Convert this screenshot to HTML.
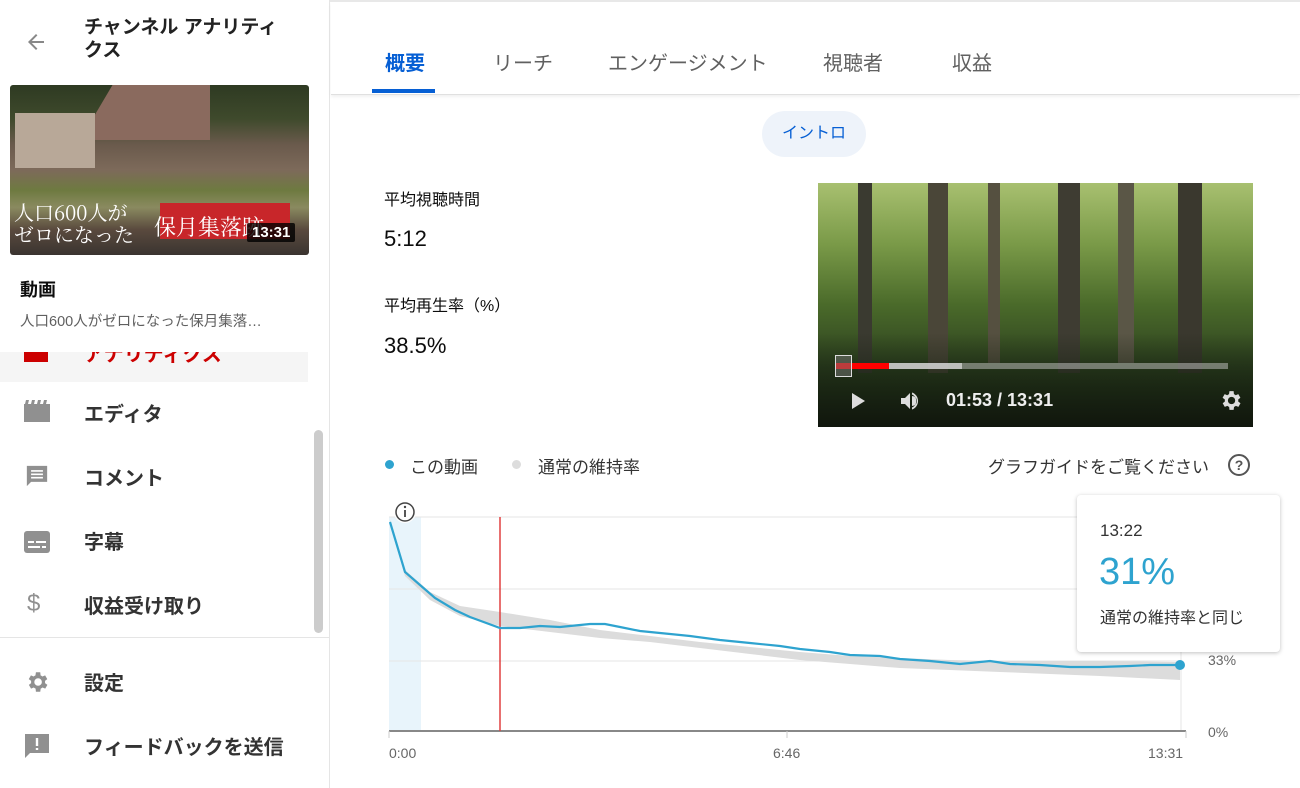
<!DOCTYPE html>
<html><head><meta charset="utf-8"><style>
*{margin:0;padding:0;box-sizing:border-box}
body{width:1300px;height:788px;overflow:hidden;background:#fff;font-family:"Liberation Sans","Noto Sans CJK JP",sans-serif;position:relative;color:#0d0d0d}
.a{position:absolute}
.side{left:0;top:0;width:330px;height:788px;border-right:1px solid #e5e5e5;background:#fff}
.nav{position:absolute;left:84px;font-size:20px;color:#333;font-weight:bold}
.ic{position:absolute;left:24px;width:26px;height:22px}
.tab{position:absolute;top:47px;font-size:20px;color:#606060}
</style></head><body>
<div class="a" style="left:0;top:0;width:1300px;height:2px;background:#e8e8e8"></div>
<div class="a side">
  <svg class="a" style="left:24px;top:30px" width="24" height="24" viewBox="0 0 24 24"><path d="M20 11H7.8l5.6-5.6L12 4l-8 8 8 8 1.4-1.4L7.8 13H20z" fill="#888"/></svg>
  <div class="a" style="left:84px;top:16px;font-size:19px;font-weight:bold;line-height:23px;color:#222">チャンネル アナリティ<br>クス</div>
  <div class="a" style="left:10px;top:85px;width:299px;height:170px;border-radius:3px;overflow:hidden;background:linear-gradient(180deg,#2e3a22 0%,#3f4a2c 20%,#6a5a4c 35%,#7d6a5a 50%,#6e7a40 62%,#8a8a60 72%,#5a4a3e 85%,#3a3430 100%)">
    <div class="a" style="left:70px;top:0;width:130px;height:55px;background:#8a6a5e;clip-path:polygon(25% 0,100% 0,100% 100%,0 100%)"></div>
    <div class="a" style="left:5px;top:28px;width:80px;height:55px;background:#b8a898"></div>
    <div class="a" style="left:150px;top:118px;width:130px;height:36px;background:#c8262a"></div>
    <div class="a" style="left:4px;top:116px;color:#fff;font-family:'Noto Serif CJK SC',serif;font-size:20px;line-height:22px">人口600人が<br>ゼロになった</div>
    <div class="a" style="left:144px;top:126px;color:#fff;font-family:'Noto Serif CJK SC',serif;font-size:22px">保月集落跡</div>
    <div class="a" style="left:237px;top:138px;background:rgba(0,0,0,.8);color:#fff;font-size:15px;font-weight:bold;padding:1px 5px;border-radius:2px">13:31</div>
  </div>
  <div class="a" style="left:20px;top:276px;font-size:18px;font-weight:bold">動画</div>
  <div class="a" style="left:20px;top:310px;font-size:14.5px;color:#606060">人口600人がゼロになった保月集落…</div>
  <div class="a" style="left:0;top:352px;width:308px;height:30px;background:#f5f5f5;overflow:hidden">
    <div class="a" style="left:24px;top:-6px;width:24px;height:16px;background:#cc0000"></div>
    <div class="a" style="left:84px;top:-14px;font-size:20px;color:#cc0000;font-weight:bold">アナリティクス</div>
  </div>
  <svg class="ic" style="top:400px" viewBox="0 0 26 22"><path d="M0 4h26v18H0z M2 0h3l-1 4H1z M8 0h3l-1 4H7z M14 0h3l-1 4h-3z M20 0h3l-1 4h-3z" fill="#909090"/></svg>
  <div class="nav" style="top:398px">エディタ</div>
  <svg class="ic" style="top:465px" viewBox="0 0 26 26"><path d="M1 1h24v19H6l-5 5z" fill="#909090"/><path d="M6 7h14M6 11h14M6 15h14" stroke="#fff" stroke-width="2"/></svg>
  <div class="nav" style="top:462px">コメント</div>
  <svg class="ic" style="top:531px" viewBox="0 0 26 22"><rect x="0" y="0" width="26" height="22" rx="3" fill="#909090"/><path d="M4 11h6M12 11h10M4 16h12M18 16h4" stroke="#fff" stroke-width="2"/></svg>
  <div class="nav" style="top:526px">字幕</div>
  <div class="a" style="left:27px;top:590px;font-size:24px;color:#909090">$</div>
  <div class="nav" style="top:590px">収益受け取り</div>
  <div class="a" style="left:314px;top:430px;width:9px;height:203px;background:#ccc;border-radius:5px"></div>
  <div class="a" style="left:0;top:637px;width:329px;height:1px;background:#e5e5e5"></div>
  <svg class="ic" style="top:669px;height:26px" viewBox="0 0 24 24"><path fill="#909090" d="M19.4 13a7.5 7.5 0 0 0 0-2l2.1-1.6-2-3.5-2.5 1a7.7 7.7 0 0 0-1.7-1L15 3h-4l-.4 2.9a7.7 7.7 0 0 0-1.7 1l-2.5-1-2 3.5L6.6 11a7.5 7.5 0 0 0 0 2l-2.1 1.6 2 3.5 2.5-1a7.7 7.7 0 0 0 1.7 1L11 21h4l.4-2.9a7.7 7.7 0 0 0 1.7-1l2.5 1 2-3.5zM13 15.5a3.5 3.5 0 1 1 0-7 3.5 3.5 0 0 1 0 7z"/></svg>
  <div class="nav" style="top:667px">設定</div>
  <svg class="ic" style="top:733px;height:26px" viewBox="0 0 26 26"><path d="M1 1h24v19H6l-5 5z" fill="#909090"/><path d="M13 5v8M13 15v2" stroke="#fff" stroke-width="2.4"/></svg>
  <div class="nav" style="top:731px">フィードバックを送信</div>
</div>
<div class="a" style="left:331px;top:2px;width:969px;height:93px;border-bottom:1px solid #e0e0e0;box-shadow:0 2px 3px rgba(0,0,0,.06)"></div>
<div class="tab" style="left:385px;color:#065fd4;font-weight:bold">概要</div>
<div class="a" style="left:372px;top:89px;width:63px;height:4px;background:#065fd4"></div>
<div class="tab" style="left:493px">リーチ</div>
<div class="tab" style="left:608px">エンゲージメント</div>
<div class="tab" style="left:823px">視聴者</div>
<div class="tab" style="left:952px">収益</div>
<div class="a" style="left:762px;top:111px;width:104px;height:46px;border-radius:23px;background:#eef3fa;color:#065fd4;font-size:16px;text-align:center;line-height:46px">イントロ</div>
<div class="a" style="left:384px;top:186px;font-size:16px">平均視聴時間</div>
<div class="a" style="left:384px;top:226px;font-size:22px">5:12</div>
<div class="a" style="left:384px;top:292px;font-size:16px">平均再生率（%）</div>
<div class="a" style="left:384px;top:333px;font-size:22px">38.5%</div>
<div class="a" style="left:818px;top:183px;width:435px;height:244px;overflow:hidden;background:linear-gradient(180deg,#a8c070 0%,#7a9a48 25%,#4a6a2a 50%,#2e4220 75%,#1e2a18 100%)">
  <div class="a" style="left:40px;top:0;width:14px;height:190px;background:#3a3a30"></div>
  <div class="a" style="left:110px;top:0;width:20px;height:190px;background:#4a4638"></div>
  <div class="a" style="left:170px;top:0;width:12px;height:180px;background:#555040"></div>
  <div class="a" style="left:240px;top:0;width:22px;height:190px;background:#3e3c32"></div>
  <div class="a" style="left:300px;top:0;width:16px;height:180px;background:#5a5646"></div>
  <div class="a" style="left:360px;top:0;width:24px;height:190px;background:#3a382e"></div>
  <div class="a" style="left:0;top:150px;width:435px;height:94px;background:linear-gradient(180deg,rgba(20,30,15,0) 0%,rgba(20,30,15,.7) 60%,rgba(15,20,12,.9) 100%)"></div>
  <div class="a" style="left:18px;top:180px;width:392px;height:6px;background:rgba(200,200,200,.5)"></div>
  <div class="a" style="left:18px;top:180px;width:126px;height:6px;background:rgba(220,220,220,.7)"></div>
  <div class="a" style="left:18px;top:180px;width:53px;height:6px;background:#f00"></div>
  <div class="a" style="left:17px;top:172px;width:17px;height:22px;border:1px solid #ddd;background:rgba(120,120,120,.5)"></div>
  <svg class="a" style="left:32px;top:208px" width="16" height="20"><path d="M2 2l13 8-13 8z" fill="#ddd"/></svg>
  <svg class="a" style="left:79px;top:206px" width="26" height="24" viewBox="0 0 24 24"><path d="M3 9v6h4l5 5V4L7 9z M14 7a5 5 0 0 1 0 10z M14 3.5v2a7 7 0 0 1 0 13v2a9 9 0 0 0 0-17z" fill="#ddd"/></svg>
  <div class="a" style="left:128px;top:207px;font-size:18px;font-weight:bold;color:#eee">01:53 / 13:31</div>
  <svg class="a" style="left:400px;top:205px" width="25" height="25" viewBox="0 0 24 24"><path fill="#ddd" d="M19.4 13a7.5 7.5 0 0 0 0-2l2.1-1.6-2-3.5-2.5 1a7.7 7.7 0 0 0-1.7-1L15 3h-4l-.4 2.9a7.7 7.7 0 0 0-1.7 1l-2.5-1-2 3.5L6.6 11a7.5 7.5 0 0 0 0 2l-2.1 1.6 2 3.5 2.5-1a7.7 7.7 0 0 0 1.7 1L11 21h4l.4-2.9a7.7 7.7 0 0 0 1.7-1l2.5 1 2-3.5zM13 15.5a3.5 3.5 0 1 1 0-7 3.5 3.5 0 0 1 0 7z"/></svg>
</div>
<div class="a" style="left:385px;top:460px;width:9px;height:9px;border-radius:50%;background:#2ea3cf"></div>
<div class="a" style="left:410px;top:453px;font-size:17px;color:#333">この動画</div>
<div class="a" style="left:512px;top:460px;width:9px;height:9px;border-radius:50%;background:#ddd"></div>
<div class="a" style="left:538px;top:453px;font-size:17px;color:#333">通常の維持率</div>
<div class="a" style="left:988px;top:453px;font-size:17px;color:#333">グラフガイドをご覧ください</div>
<svg class="a" style="left:1227px;top:453px" width="24" height="24" viewBox="0 0 24 24"><circle cx="12" cy="12" r="10" fill="none" stroke="#555" stroke-width="2"/><text x="12" y="17" text-anchor="middle" font-size="14" font-weight="bold" fill="#555" font-family="Liberation Sans">?</text></svg>
<svg class="a" style="left:0;top:0" width="1300" height="788">
  <rect x="389" y="517" width="32" height="214" fill="#e8f4fb"/>
  <g stroke="#e6e6e6" stroke-width="1"><line x1="389" y1="517" x2="1181" y2="517"/><line x1="389" y1="589" x2="1181" y2="589"/><line x1="389" y1="661" x2="1181" y2="661"/><line x1="1181" y1="517" x2="1181" y2="731"/></g>
  <line x1="389" y1="731" x2="1186" y2="731" stroke="#888" stroke-width="2"/>
  <path d="M390 520 L405 570 L430 592 L460 606 L500 612 L550 620 L600 630 L650 636 L700 642 L750 647 L800 652 L850 656 L900 658 L950 660 L1000 661 L1050 661 L1100 661 L1180 662 L1180 680 L1100 676 L1050 674 L1000 672 L950 670 L900 668 L850 664 L800 660 L750 654 L700 648 L650 642 L600 638 L550 632 L500 626 L460 616 L430 600 L405 576 L390 524 Z" fill="#dcdcdc"/>
  <line x1="500" y1="517" x2="500" y2="731" stroke="#e04040" stroke-width="1.5"/>
  <polyline fill="none" stroke="#2ea3cf" stroke-width="2.2" points="390,522 405,572 420,585 435,598 455,610 470,617 500,628 520,628 540,626 560,627 590,624 605,624 620,627 640,631 660,633 690,636 720,640 750,643 780,646 800,649 830,652 850,655 880,656 900,659 930,661 960,664 990,661 1010,664 1040,665 1070,667 1100,667 1130,666 1150,665 1180,665"/>
  <circle cx="1180" cy="665" r="5" fill="#2ea3cf"/>
  <circle cx="405" cy="512" r="11" fill="#fff"/>
  <circle cx="405" cy="512" r="9" fill="none" stroke="#444" stroke-width="1.5"/>
  <line x1="405" y1="510" x2="405" y2="517" stroke="#444" stroke-width="1.8"/><circle cx="405" cy="507" r="1.2" fill="#444"/>
  <g font-family="Liberation Sans" font-size="14" fill="#666">
    <text x="389" y="758">0:00</text><text x="773" y="758">6:46</text><text x="1148" y="758">13:31</text>
    <text x="1208" y="665">33%</text><text x="1208" y="737">0%</text>
  </g>
  <line x1="389" y1="731" x2="389" y2="738" stroke="#ccc"/><line x1="787" y1="731" x2="787" y2="738" stroke="#ccc"/><line x1="1186" y1="731" x2="1186" y2="738" stroke="#ccc"/>
</svg>
<div class="a" style="left:1077px;top:495px;width:203px;height:157px;background:#fff;border-radius:4px;box-shadow:0 1px 4px rgba(0,0,0,.25)">
  <div class="a" style="left:23px;top:26px;font-size:17px;color:#333">13:22</div>
  <div class="a" style="left:22px;top:56px;font-size:38px;color:#2ea3cf">31%</div>
  <div class="a" style="left:23px;top:109px;font-size:16px;color:#333">通常の維持率と同じ</div>
</div>
</body></html>
